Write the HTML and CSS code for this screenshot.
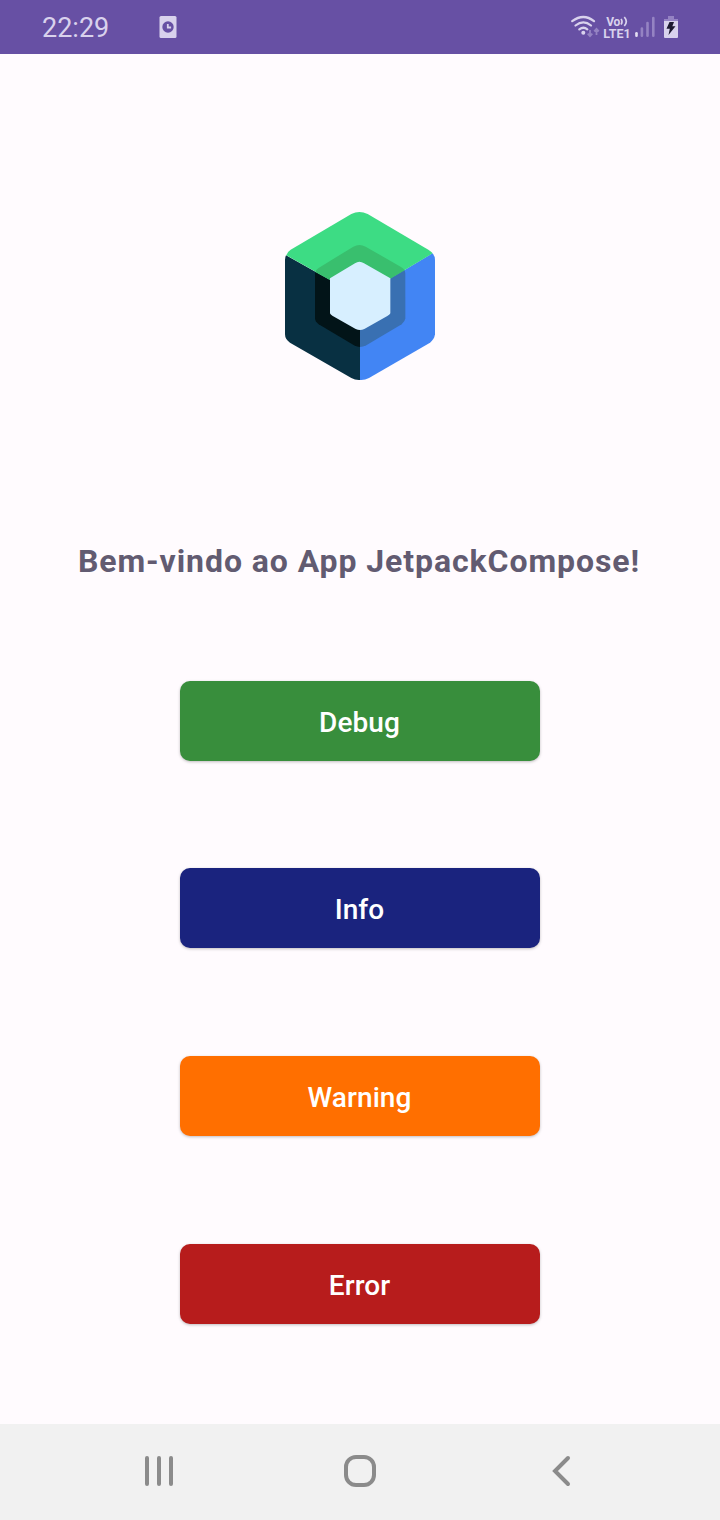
FILE: index.html
```html
<!DOCTYPE html>
<html lang="pt-BR">
<head>
<meta charset="utf-8">
<title>JetpackCompose</title>
<link rel="stylesheet" href="styles.css">
</head>
<body>
<header class="status">
  <span class="time">22:29</span>
  <svg class="alarm" width="18" height="22" viewBox="0 0 18 22"><rect x=".5" width="17" height="22" rx="1.500" fill="#d9d2ed"/><circle cx="9" cy="11" r="5.700" fill="#6750a4"/><path d="M8.800 8v3.500h3.300" fill="none" stroke="#d9d2ed" stroke-width="1.800"/></svg>
  <div class="indicators">
    <svg class="wifi" width="30" height="24" viewBox="0 0 30 24"><g fill="none" stroke="#d9d2ed" stroke-width="2.200" stroke-linecap="round"><path d="M1.200 6.200Q12.500 -2.200 23 6.200M4.500 10.500Q12.500 4.300 20 10.500M8.300 14.300Q12.500 11.200 16.300 14.300"/></g><circle cx="12.300" cy="17.700" r="2" fill="#d9d2ed"/><path d="M19 15v6M16.700 18.700l2.300 2.500 2.300-2.500M25.500 20v-6M23.200 16.300l2.300-2.500 2.300 2.500" fill="none" stroke="#9583c3" stroke-width="1.800"/></svg>
    <div class="volte"><span class="vo">Vo<svg width="8" height="11" viewBox="0 0 8 11"><path d="M1 3q2 2.700 0 5.500M4.300 1q4 4.500 0 9" fill="none" stroke="#d9d2ed" stroke-width="1.700"/></svg></span><span class="lte">LTE1</span></div>
    <svg class="signal" width="20" height="22" viewBox="0 0 20 22"><g fill="none" stroke-width="2.600" stroke-linecap="round"><path d="M1.500 17.300v2.500" stroke="#e4def2"/><path d="M6.900 12.500v7.300M12.500 7v12.800M18.300 2v17.800" stroke="#9583c3"/></g></svg>
    <svg class="battery" width="14" height="22" viewBox="0 0 14 22"><path d="M4 0h6v3h4v3H0V3h4z" fill="#9583c3"/><path d="M0 5h14v16q0 1-1 1H1q-1 0-1-1z" fill="#d9d2ed"/><path d="M5.500 6H10L8.300 10.300h3.200L4.500 19l1.300-6.300H2.500z" fill="#1d1930"/></svg>
  </div>
</header>
<main class="content">
  <svg class="logo" width="180" height="190" viewBox="0 0 540 570">
    <path fill="#083042" d="M48 166L270 290V540Q256 541 244 534L60 428Q45 418 45 403V180Q45 172 48 166z"/>
    <path fill="#4285f4" d="M487 160Q495 167 495 180V403Q493 418 480 428L297 534Q284 541 270 540V290z"/>
    <path fill="#3ddc84" d="M49 166Q52 155 62 149L244 42Q268 30 293 42L475 149Q485 155 488 160L270 290z"/>
    <path fill="#021418" d="M136 216L270 290V441Q262 441 252 436L146 373Q135 365 135 355V222z"/>
    <path fill="#3970b2" d="M403 210Q406 215 406 222V355Q405 365 395 373L289 436Q279 441 270 441V290z"/>
    <path fill="#39bf6e" d="M136 216Q139 207 147 203L250 140Q268 130 287 140L393 201Q402 206 404 211L270 290z"/>
    <path fill="#d7efff" d="M180 235L255 190Q268 181 282 190L361 235V340Q360 343 352 348L283 387Q270 393 257 387L187 347Q180 343 180 340z"/>
  </svg>
  <h1 class="title">Bem-vindo ao App JetpackCompose!</h1>
  <div class="actions">
    <button class="btn debug">Debug</button>
    <button class="btn info">Info</button>
    <button class="btn warning">Warning</button>
    <button class="btn error">Error</button>
  </div>
</main>
<nav class="navbar">
  <svg width="30" height="32" viewBox="0 0 30 32"><path d="M3 3v26M15 3v26M27 3v26" stroke="#8b8b8b" stroke-width="4" stroke-linecap="round"/></svg>
  <svg class="home" width="32" height="32" viewBox="0 0 32 32"><rect x="2" y="2" width="28" height="28" rx="10" fill="none" stroke="#8b8b8b" stroke-width="4"/></svg>
  <svg width="20" height="32" viewBox="0 0 20 32"><path d="M17 3L4 16l13 13" fill="none" stroke="#8b8b8b" stroke-width="4" stroke-linecap="round"/></svg>
</nav>
</body>
</html>
```
FILE: styles.css
```css
* { box-sizing: border-box; }
body {
  margin: 0;
  height: 1520px;
  display: flex;
  flex-direction: column;
  background: #fffbfe;
  font-family: Roboto, sans-serif;
}
.status {
  height: 54px;
  padding: 0 42px;
  display: flex;
  align-items: center;
  background: #6750a4;
  color: #d9d2ed;
}
.time { width: 117px; padding-top: 2px; font-size: 27px; line-height: 52px; }
.indicators { margin-left: auto; display: flex; align-items: center; }
.volte {
  width: 28px;
  margin: 1px 4px 0 2px;
  display: flex;
  flex-direction: column;
  align-items: center;
  font-weight: 700;
  line-height: 12px;
}
.vo { display: flex; align-items: center; height: 12px; font-size: 12px; letter-spacing: -.4px; }
.lte { font-size: 12.5px; }
.signal { margin-right: 9px; }
.content {
  flex: 1;
  display: flex;
  flex-direction: column;
  align-items: center;
  padding-top: 146px;
}
.title {
  margin: 150px 0 0;
  padding-right: 2px;
  font-size: 32px;
  line-height: 42px;
  font-weight: 700;
  letter-spacing: .92px;
  color: #625b71;
  white-space: nowrap;
}
.actions { margin-top: 99px; display: grid; gap: 107.670px; }
.btn {
  width: 360px;
  height: 80px;
  padding: 4px 1px 0 0;
  border: 0;
  border-radius: 10px;
  color: #fff;
  font: 500 28px/36px Roboto, sans-serif;
  letter-spacing: .1px;
  box-shadow: 0 1px 3px rgba(0, 0, 0, .25);
}
.debug { background: #388e3c; }
.info { margin: -.67px 0 .67px; background: #1a237e; }
.warning { background: #ff6f00; }
.error { background: #b71c1c; }
.navbar {
  height: 96px;
  padding: 0 149px 2px 144px;
  display: flex;
  align-items: center;
  background: #f1f1f1;
}
.home { margin: 0 auto 0 170px; }
```
